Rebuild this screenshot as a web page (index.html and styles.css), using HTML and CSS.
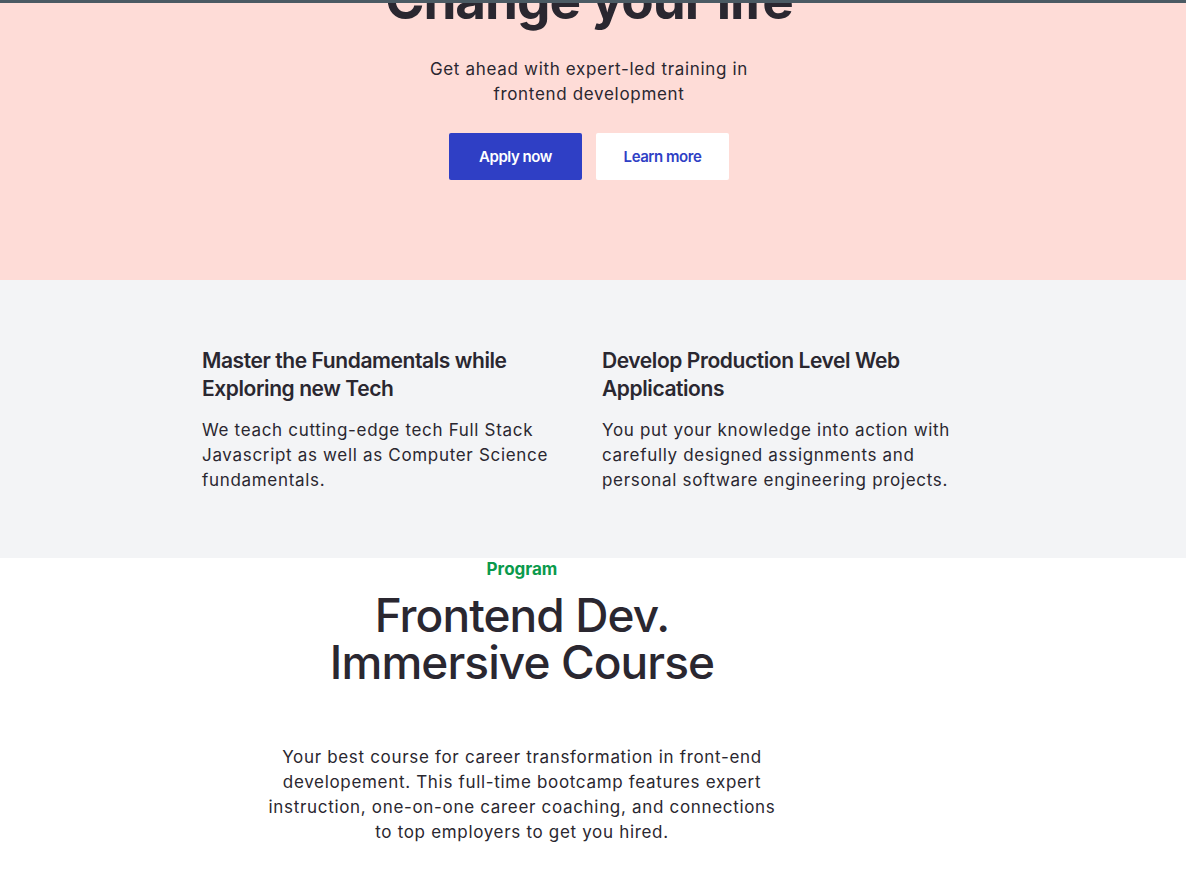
FILE: index.html
```html
<!DOCTYPE html>
<html lang="en">
<head>
<meta charset="utf-8">
<title>Frontend Dev Immersive</title>
<link rel="stylesheet" href="styles.css">
</head>
<body>
<div class="topbar"></div>
<main class="page">
  <section class="hero">
    <h1 class="hero-title">Change your life</h1>
    <p class="hero-sub">Get ahead with expert-led training in frontend development</p>
    <div class="hero-actions">
      <a class="btn btn-primary" href="#">Apply now</a>
      <a class="btn btn-secondary" href="#">Learn more</a>
    </div>
  </section>
  <section class="features">
    <div class="features-grid">
      <div class="feature">
        <h3 class="feature-title">Master the Fundamentals while Exploring new Tech</h3>
        <p class="feature-text">We teach cutting-edge tech Full Stack Javascript as well as Computer Science fundamentals.</p>
      </div>
      <div class="feature">
        <h3 class="feature-title">Develop Production Level Web Applications</h3>
        <p class="feature-text">You put your knowledge into action with carefully designed assignments and personal software engineering projects.</p>
      </div>
    </div>
  </section>
  <section class="program">
    <div class="program-inner">
      <p class="program-label">Program</p>
      <h2 class="program-title">Frontend Dev.<br>Immersive Course</h2>
      <p class="program-text">Your best course for career transformation in front-end developement. This full-time bootcamp features expert instruction, one-on-one career coaching, and connections to top employers to get you hired.</p>
    </div>
  </section>
</main>
</body>
</html>
```
FILE: styles.css
```css
* { box-sizing: border-box; }
html, body { margin: 0; padding: 0; }
body {
  font-family: "Inter", "Noto Sans", sans-serif;
  color: #2a2730;
  background: #ffffff;
  overflow: hidden;
}
.topbar {
  height: 3px;
  background: #4b5a63;
}
.page { display: flex; flex-direction: column; }

.hero {
  background: #fedcd7;
  height: 277px;
  padding-right: 8px;
  display: flex;
  flex-direction: column;
  align-items: center;
  overflow: hidden;
}
.hero-title {
  margin: -38px 0 0;
  font-size: 53px;
  line-height: 71px;
  font-weight: 700;
  letter-spacing: -0.02em;
  color: #2a2730;
}
.hero-sub {
  margin: 21px 0 0;
  width: 380px;
  text-align: center;
  font-size: 17px;
  line-height: 25px;
  letter-spacing: 0.04em;
  color: #2a2730;
}
.hero-actions {
  display: flex;
  gap: 14px;
  margin-top: 26px;
}
.btn {
  width: 133px;
  height: 47px;
  display: flex;
  align-items: center;
  justify-content: center;
  border-radius: 2px;
  font-size: 15px;
  font-weight: 600;
  letter-spacing: -0.03em;
  text-decoration: none;
}
.btn-primary { background: #2f3fc5; color: #ffffff; }
.btn-secondary { background: #ffffff; color: #2f3fc5; }

.features {
  background: #f3f4f6;
  height: 278px;
  padding-top: 67px;
}
.features-grid {
  display: grid;
  grid-template-columns: 370px 370px;
  column-gap: 30px;
  margin-left: 202px;
}
.feature-title {
  margin: 0;
  font-size: 21px;
  line-height: 28px;
  font-weight: 600;
  letter-spacing: -0.02em;
  color: #2a2730;
}
.feature-text {
  margin: 15px 0 0;
  font-size: 17px;
  line-height: 25px;
  letter-spacing: 0.04em;
  color: #2a2730;
}

.program {
  background: #ffffff;
  padding-right: 142px;
}
.program-inner {
  display: flex;
  flex-direction: column;
  align-items: center;
  text-align: center;
}
.program-label {
  margin: 0;
  padding-top: 1px;
  font-size: 17px;
  line-height: 20px;
  font-weight: 700;
  color: #0a9a4c;
}
.program-title {
  margin: 13px 0 0;
  font-size: 46px;
  line-height: 47px;
  font-weight: 500;
  letter-spacing: -0.02em;
  color: #2a2730;
}
.program-text {
  margin: 59px 0 0;
  width: 515px;
  font-size: 17px;
  line-height: 25px;
  letter-spacing: 0.04em;
  color: #2a2730;
}
```
